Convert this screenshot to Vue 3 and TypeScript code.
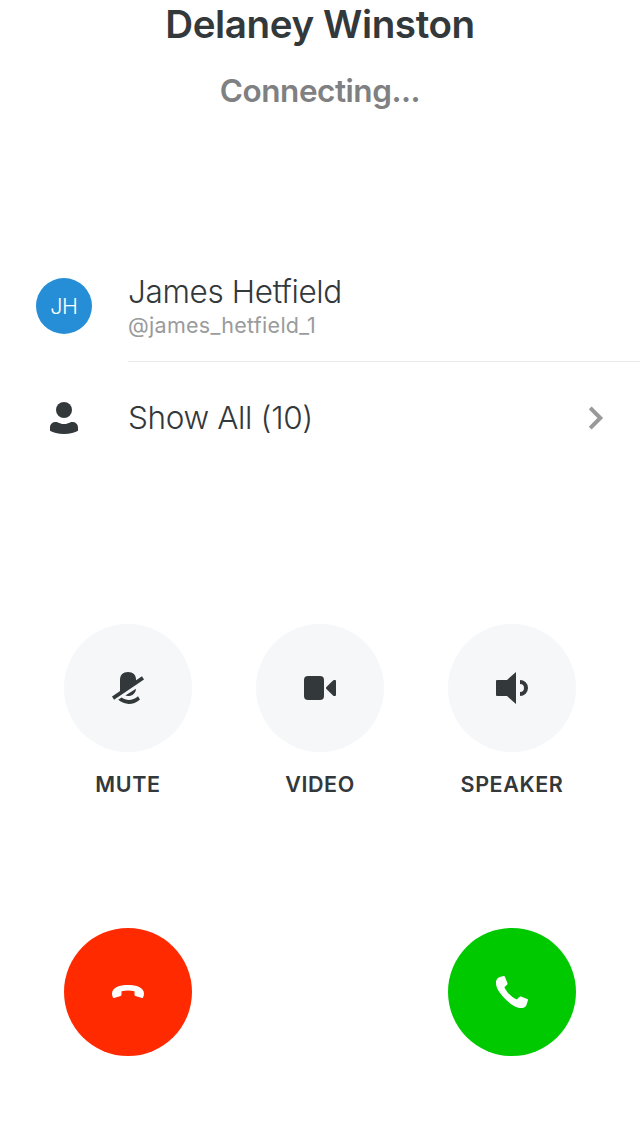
<script setup lang="ts">
interface CallControl {
  id: 'mute' | 'video' | 'speaker'
  label: string
}

const callee: string = 'Delaney Winston'
const status: string = 'Connecting...'
const participant = { initials: 'JH', name: 'James Hetfield', handle: '@james_hetfield_1' }
const participantCount: number = 10
const controls: CallControl[] = [
  { id: 'mute', label: 'MUTE' },
  { id: 'video', label: 'VIDEO' },
  { id: 'speaker', label: 'SPEAKER' },
]
</script>

<template>
  <main class="screen">
    <header class="header">
      <h1 class="callee">{{ callee }}</h1>
      <p class="status">{{ status }}</p>
    </header>

    <section class="list">
      <div class="row">
        <div class="lead"><span class="avatar">{{ participant.initials }}</span></div>
        <div class="body divided">
          <span class="name">{{ participant.name }}</span>
          <span class="handle">{{ participant.handle }}</span>
        </div>
      </div>
      <div class="row">
        <div class="lead">
          <svg class="icon" viewBox="0 0 32 32">
            <circle cx="16" cy="8" r="8" />
            <path d="M2 25.5C2 22 4.6 20 8 20C10.2 20 11.5 22 16 22S21.8 20 24 20C27.4 20 30 22 30 25.5V28.8C27 30.8 22 32 16 32S5 30.8 2 28.8Z" />
          </svg>
        </div>
        <div class="body inline">
          <span class="show-all">Show All ({{ participantCount }})</span>
          <svg class="chevron" viewBox="0 0 16 24"><path d="M2.2 1.9L12.3 12L2.2 22.1" /></svg>
        </div>
      </div>
    </section>

    <section class="controls">
      <div v-for="control in controls" :key="control.id" class="control">
        <button class="round" :aria-label="control.label">
          <svg v-if="control.id === 'mute'" class="icon" viewBox="0 0 32 32">
            <path d="M8 22V7.5C8 3 11 0 16 0S24 3 24 7.5V11Z" />
            <path d="M30 4.2L32 7.5L2 27.7L0 24.5Z" />
            <path d="M13.3 23.6L24 16.7C23.7 21.2 20.5 24 16 24C15 24 14.2 23.9 13.3 23.6Z" />
            <path d="M9.5 25.6C14.8 29 20.7 28.7 26 24.2L28 27.4C21.3 33.2 13 33.5 6.2 27.8Z" />
          </svg>
          <svg v-else-if="control.id === 'video'" class="icon" viewBox="0 0 32 32">
            <rect x="0" y="4" width="20" height="24" rx="4" />
            <path d="M22.4 15.1L29 8.5Q29.5 8 30.2 8H31Q32 8 32 9V23Q32 24 31 24H30.2Q29.5 24 29 23.5L22.4 16.9Q21.6 16 22.4 15.1Z" />
          </svg>
          <svg v-else class="icon" viewBox="0 0 32 32">
            <path d="M0 9Q0 8 1 8H11L20 0V32L11 24H1Q0 24 0 23Z" />
            <path d="M24 8A8 8 0 0 1 24 24V20A4 4 0 0 0 24 12Z" />
          </svg>
        </button>
        <span class="label">{{ control.label }}</span>
      </div>
    </section>

    <footer class="actions">
      <button class="round decline" aria-label="Decline">
        <svg class="icon" viewBox="0 0 32 32">
          <path d="M0 17.5C0 11.5 7.5 9 16 9S32 11.5 32 17.5C32 19 31.5 20.5 31 21.5Q30.7 22.3 29.8 22L23.5 20Q22.5 19.7 22.5 18.7V15.3C18.5 14.2 13.5 14.2 9.5 15.3V18.7Q9.5 19.7 8.5 20L2.2 22Q1.3 22.3 1 21.5C.5 20.5 0 19 0 17.5Z" />
        </svg>
      </button>
      <button class="round accept" aria-label="Accept">
        <svg class="icon" viewBox="0 0 32 32">
          <path d="M7.6 .1Q8.5 -.2 8.9 .7L11.4 7.1Q11.8 8 11 8.7L8.4 11.2C10.7 16.4 15.6 21.3 20.8 23.6L23.3 21Q24 20.2 24.9 20.6L31.3 23.1Q32.2 23.5 31.9 24.4C31.1 26.8 30.6 29.5 29.3 30.8C27.5 32.6 22.1 33 15.7 28.5C11.2 25.4 6.6 20.8 3.5 16.3C-1 9.9 -.6 4.5 1.2 2.7C2.5 1.4 5.2 .9 7.6 .1Z" />
        </svg>
      </button>
    </footer>
  </main>
</template>

<style>
body {
  margin: 0;
  background: #fff;
}
</style>

<style scoped>
.screen {
  width: 640px;
  height: 1136px;
  overflow: hidden;
  display: flex;
  flex-direction: column;
  background: #fff;
  color: #33383b;
  font-family: Inter, "Liberation Sans", sans-serif;
}
.header {
  height: 250px;
  text-align: center;
  white-space: nowrap;
}
.callee {
  margin: 0;
  font-size: 38.6px;
  line-height: 48px;
  font-weight: 600;
  letter-spacing: -0.4px;
}
.status {
  margin: 23px 0 0;
  font-size: 31.5px;
  line-height: 40px;
  font-weight: 600;
  letter-spacing: -0.47px;
  color: #7f8081;
}
.list {
  height: 374px;
}
.row {
  display: flex;
  height: 112px;
}
.lead {
  width: 128px;
  display: flex;
  align-items: center;
  justify-content: center;
}
.avatar {
  width: 56px;
  height: 56px;
  border-radius: 50%;
  background: #258ed6;
  color: #fff;
  font-size: 21.5px;
  line-height: 57px;
  font-weight: 300;
  letter-spacing: -0.3px;
  text-align: center;
}
.body {
  flex: 1;
  box-sizing: border-box;
  display: flex;
  flex-direction: column;
}
.divided {
  padding-top: 22px;
  border-bottom: 1px solid #e8e9ea;
}
.inline {
  flex-direction: row;
  align-items: center;
  justify-content: space-between;
  padding-right: 36px;
}
.name,
.show-all {
  font-size: 31.5px;
  line-height: 40px;
  font-weight: 300;
  letter-spacing: -0.37px;
}
.handle {
  margin-top: -1px;
  font-size: 21.5px;
  line-height: 28px;
  letter-spacing: 0.28px;
  color: #999b9c;
}
.icon {
  display: block;
  width: 32px;
  height: 32px;
  fill: currentColor;
}
.chevron {
  width: 16px;
  height: 24px;
  overflow: visible;
  fill: none;
  stroke: #999;
  stroke-width: 4;
}
.controls {
  display: flex;
  justify-content: space-between;
  height: 304px;
  padding: 0 64px;
}
.control {
  width: 128px;
  display: flex;
  flex-direction: column;
  align-items: center;
}
.round {
  width: 128px;
  height: 128px;
  padding: 0;
  border: 0;
  border-radius: 50%;
  background: #f5f7f9;
  color: #33383b;
  display: flex;
  align-items: center;
  justify-content: center;
}
.label {
  margin-top: 18px;
  font-size: 21.5px;
  line-height: 28px;
  font-weight: 600;
  letter-spacing: 0.6px;
}
.actions {
  display: flex;
  justify-content: space-between;
  padding: 0 64px;
}
.decline {
  background: #ff2a00;
  color: #fff;
}
.accept {
  background: #00c900;
  color: #fff;
}
</style>
